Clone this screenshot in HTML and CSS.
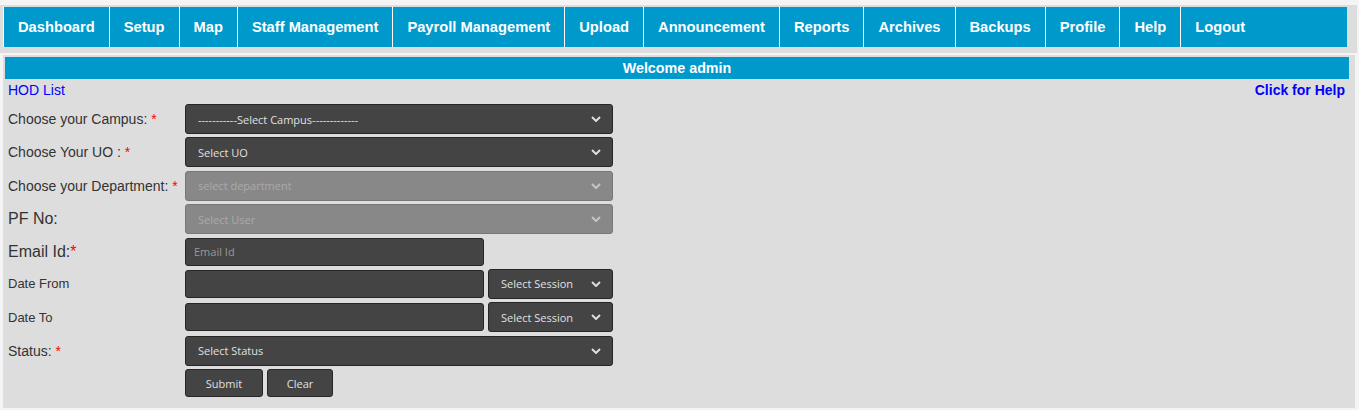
FILE: index.html
```html
<!DOCTYPE html>
<html>
<head>
<meta charset="utf-8">
<title>HOD List</title>
<link rel="stylesheet" href="styles.css">
</head>
<body>
<div class="header">
  <ul class="nav">
    <li><a href="#">Dashboard</a></li>
    <li><a href="#">Setup</a></li>
    <li><a href="#">Map</a></li>
    <li><a href="#">Staff Management</a></li>
    <li><a href="#">Payroll Management</a></li>
    <li><a href="#">Upload</a></li>
    <li><a href="#">Announcement</a></li>
    <li><a href="#">Reports</a></li>
    <li><a href="#">Archives</a></li>
    <li><a href="#">Backups</a></li>
    <li><a href="#">Profile</a></li>
    <li><a href="#">Help</a></li>
    <li><a href="#">Logout</a></li>
  </ul>
</div>
<div class="main">
  <div class="welcome">Welcome admin</div>
  <div class="links">
    <a href="#" class="link">HOD List</a>
    <a href="#" class="link help">Click for Help</a>
  </div>
  <form class="form">
    <div class="row">
      <label class="lbl">Choose your Campus: <span class="req">*</span></label>
      <div class="sel wide">
        <select><option>-----------Select Campus-------------</option></select>
        <svg class="chev" width="10" height="6" viewBox="0 0 10 6"><polyline points="1,1 5,5 9,1" fill="none" stroke="#ddd" stroke-width="2"/></svg>
      </div>
    </div>
    <div class="row">
      <label class="lbl">Choose Your UO : <span class="req">*</span></label>
      <div class="sel wide">
        <select><option>Select UO</option></select>
        <svg class="chev" width="10" height="6" viewBox="0 0 10 6"><polyline points="1,1 5,5 9,1" fill="none" stroke="#ddd" stroke-width="2"/></svg>
      </div>
    </div>
    <div class="row">
      <label class="lbl">Choose your Department: <span class="req">*</span></label>
      <div class="sel wide disabled">
        <select disabled><option>select department</option></select>
        <svg class="chev" width="10" height="6" viewBox="0 0 10 6"><polyline points="1,1 5,5 9,1" fill="none" stroke="#c4c4c4" stroke-width="2"/></svg>
      </div>
    </div>
    <div class="row">
      <label class="lbl big">PF No:</label>
      <div class="sel wide disabled">
        <select disabled><option>Select User</option></select>
        <svg class="chev" width="10" height="6" viewBox="0 0 10 6"><polyline points="1,1 5,5 9,1" fill="none" stroke="#c4c4c4" stroke-width="2"/></svg>
      </div>
    </div>
    <div class="row short">
      <label class="lbl big">Email Id:<span class="req">*</span></label>
      <input class="txt" type="text" placeholder="Email Id">
    </div>
    <div class="row">
      <label class="lbl small">Date From</label>
      <input class="txt" type="text">
      <div class="sel session">
        <select><option>Select Session</option></select>
        <svg class="chev" width="10" height="6" viewBox="0 0 10 6"><polyline points="1,1 5,5 9,1" fill="none" stroke="#ddd" stroke-width="2"/></svg>
      </div>
    </div>
    <div class="row">
      <label class="lbl small">Date To</label>
      <input class="txt" type="text">
      <div class="sel session">
        <select><option>Select Session</option></select>
        <svg class="chev" width="10" height="6" viewBox="0 0 10 6"><polyline points="1,1 5,5 9,1" fill="none" stroke="#ddd" stroke-width="2"/></svg>
      </div>
    </div>
    <div class="row">
      <label class="lbl">Status: <span class="req">*</span></label>
      <div class="sel wide">
        <select><option>Select Status</option></select>
        <svg class="chev" width="10" height="6" viewBox="0 0 10 6"><polyline points="1,1 5,5 9,1" fill="none" stroke="#ddd" stroke-width="2"/></svg>
      </div>
    </div>
    <div class="row short">
      <span class="lbl"></span>
      <button type="button" class="btn submit">Submit</button>
      <button type="button" class="btn clear">Clear</button>
    </div>
  </form>
</div>
</body>
</html>
```
FILE: styles.css
```css
html, body {
  margin: 0;
  padding: 0;
}
body {
  background: #f4f4f4;
  padding-top: 5px;
  font-family: "Liberation Sans", Arial, sans-serif;
}
.header {
  background: #dddddd;
  padding: 2px 0 6px 3px;
  margin-right: 2px;
}
.nav {
  display: flex;
  list-style: none;
  margin: 0;
  padding: 0;
  width: 1344px;
  height: 40px;
  background: #0099cc;
}
.nav li a {
  display: block;
  padding: 0 14px;
  border-left: 1px solid #ffffff;
  color: #ffffff;
  font-weight: bold;
  font-size: 14.7px;
  line-height: 40px;
  text-decoration: none;
}
.main {
  margin: 2px 4px 0 3px;
  background: #dddddd;
  padding: 2px 6px 0 2px;
  min-height: calc(100vh - 57px);
  box-sizing: border-box;
}
.welcome {
  background: #0099cc;
  color: #ffffff;
  font-weight: bold;
  font-size: 14.3px;
  text-align: center;
  height: 22px;
  line-height: 22px;
}
.links {
  display: flex;
  justify-content: space-between;
  padding: 0 4px 0 3px;
  height: 22px;
  line-height: 22px;
  font-size: 14px;
}
.link {
  color: #0000ff;
  text-decoration: none;
}
.help {
  font-weight: bold;
}
.form {
  margin: 3px 0 0 0;
  padding-left: 3px;
  display: flex;
  flex-direction: column;
  gap: 3.4px;
}
.row {
  display: flex;
  align-items: center;
  height: 30px;
}
.row.short {
  height: 28px;
}
.lbl {
  width: 177px;
  flex: none;
  font-size: 14px;
  color: #333333;
}
.lbl.big {
  font-size: 16px;
}
.lbl.small {
  font-size: 13px;
}
.req {
  color: #ff0000;
}
.sel {
  position: relative;
  height: 30px;
  flex: none;
}
.sel.wide {
  width: 428px;
}
.sel.session {
  width: 125px;
  margin-left: 4px;
}
.sel select {
  appearance: none;
  -webkit-appearance: none;
  width: 100%;
  height: 100%;
  margin: 0;
  background: #444444;
  border: 1px solid #262626;
  border-radius: 3px;
  color: #e0e0e0;
  font-family: "Open Sans", "Noto Sans", sans-serif;
  font-size: 11px;
  padding: 0 30px 0 12px;
  outline: none;
}
.sel.disabled select {
  background: #888888;
  border-color: #777777;
  color: #aaaaaa;
  opacity: 1;
}
.chev {
  position: absolute;
  right: 12px;
  top: 12px;
  pointer-events: none;
}
.txt {
  width: 299px;
  height: 28px;
  box-sizing: border-box;
  margin: 0;
  background: #444444;
  border: 1px solid #262626;
  border-radius: 3px;
  color: #e0e0e0;
  font-family: "Open Sans", "Noto Sans", sans-serif;
  font-size: 11px;
  padding: 0 8px;
  outline: none;
  flex: none;
}
.txt::placeholder {
  color: #999999;
}
.btn {
  height: 28px;
  margin: 0;
  background: #444444;
  border: 1px solid #262626;
  border-radius: 3px;
  color: #e0e0e0;
  font-family: "Open Sans", "Noto Sans", sans-serif;
  font-size: 11px;
  padding: 0;
  cursor: pointer;
}
.btn.submit {
  width: 78px;
}
.btn.clear {
  width: 66px;
  margin-left: 4px;
}
```
